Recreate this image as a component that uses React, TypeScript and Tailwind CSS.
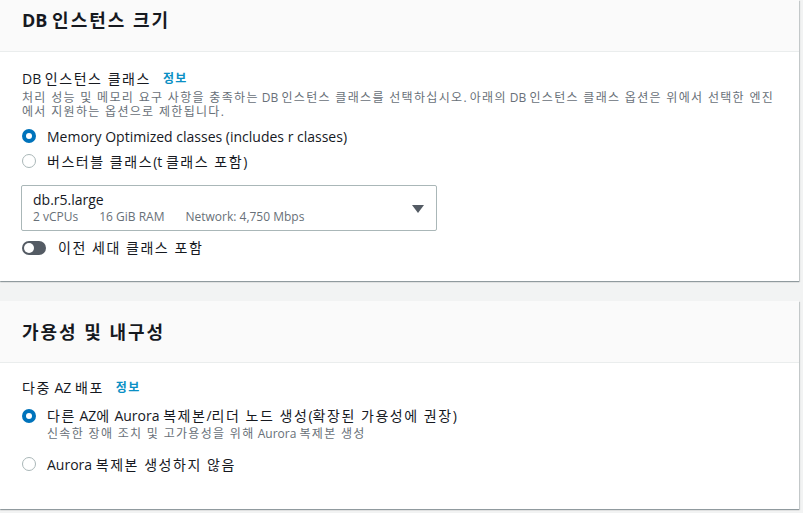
import React from "react";

const font = { fontFamily: '"Open Sans", "Noto Sans CJK KR", "Noto Sans", sans-serif' };

function K({ children }: { children: string }) {
  const parts = children.split(/([\uac00-\ud7a3]+(?:\s+[\uac00-\ud7a3]+)*)/);
  return (
    <span>
      {parts.map((p, i) =>
        /[\uac00-\ud7a3]/.test(p) ? (
          <span key={i} className="tracking-[0.11em]">
            {p}
          </span>
        ) : (
          <React.Fragment key={i}>{p}</React.Fragment>
        )
      )}
    </span>
  );
}

function Radio({ checked }: { checked: boolean }) {
  return checked ? (
    <span className="flex h-[14px] w-[14px] shrink-0 items-center justify-center rounded-full bg-[#0073bb]">
      <span className="h-[6px] w-[6px] rounded-full bg-white" />
    </span>
  ) : (
    <span className="block h-[14px] w-[14px] shrink-0 rounded-full border border-[#aab7b8] bg-white" />
  );
}

function Info() {
  return (
    <span className="ml-[12px] text-[12px] font-bold tracking-[0.11em] text-[#0a8fc4]">정보</span>
  );
}

export default function App() {
  return (
    <div className="min-h-[513px] w-[803px] bg-[#f2f3f3] pr-[4px] text-[#16191f]" style={font}>
      <section className="bg-white shadow-[0_1px_1px_0_rgba(0,28,36,0.3),1px_1px_1px_0_rgba(0,28,36,0.15)]">
        <div className="flex h-[52px] items-start border-b border-[#eaeded] bg-[#fafafa] pl-[22px] pt-[6px]">
          <h2 className="text-[18px] font-bold leading-[28px]">
            <K>DB 인스턴스 크기</K>
          </h2>
        </div>
        <div className="pl-[22px] pr-[10px] pt-[16px] pb-[23px]">
          <div className="flex items-center text-[14px] leading-[22px]">
            <K>DB 인스턴스 클래스</K>
            <Info />
          </div>
          <p className="mt-[1px] whitespace-nowrap text-[12px] leading-[14px] text-[#687078]">
            <K>처리 성능 및 메모리 요구 사항을 충족하는 DB 인스턴스 클래스를 선택하십시오. 아래의 DB 인스턴스 클래스 옵션은 위에서 선택한 엔진</K>
            <br />
            <K>에서 지원하는 옵션으로 제한됩니다.</K>
          </p>
          <div className="mt-[7px] flex flex-col gap-[5px]">
            <label className="flex h-[20px] items-center gap-[11px] text-[14px]">
              <Radio checked />
              <span>Memory Optimized classes (includes r classes)</span>
            </label>
            <label className="flex h-[20px] items-center gap-[11px] text-[14px]">
              <Radio checked={false} />
              <K>버스터블 클래스(t 클래스 포함)</K>
            </label>
          </div>
          <div className="ml-[-1px] mt-[14px] flex h-[46px] w-[416px] items-center justify-between rounded-[2px] border border-[#aab7b8] bg-white pl-[11px] pr-[12px]">
            <div className="flex flex-col">
              <span className="text-[14px] leading-[18px]">db.r5.large</span>
              <span className="flex gap-[21px] text-[12px] leading-[16px] text-[#687078]">
                <span>2 vCPUs</span>
                <span>16 GiB RAM</span>
                <span>Network: 4,750 Mbps</span>
              </span>
            </div>
            <svg width="12" height="8" viewBox="0 0 12 8" className="mt-[2px]">
              <path d="M0 0h12L6 8z" fill="#545b64" />
            </svg>
          </div>
          <div className="mt-[6px] flex items-center gap-[12px] text-[14px]">
            <span className="relative inline-block h-[14px] w-[24px] rounded-full bg-[#545b64]">
              <span className="absolute left-[2px] top-[2px] h-[10px] w-[10px] rounded-full bg-white" />
            </span>
            <K>이전 세대 클래스 포함</K>
          </div>
        </div>
      </section>

      <div className="h-[20px]" />

      <section className="bg-white shadow-[0_1px_1px_0_rgba(0,28,36,0.3),1px_1px_1px_0_rgba(0,28,36,0.15)]">
        <div className="flex h-[62px] items-center border-b border-[#eaeded] bg-[#fafafa] pl-[22px]">
          <h2 className="text-[18px] font-bold leading-[28px]">
            <K>가용성 및 내구성</K>
          </h2>
        </div>
        <div className="pl-[22px] pr-[10px] pt-[14px] pb-[35px]">
          <div className="flex items-center text-[14px] leading-[22px]">
            <K>다중 AZ 배포</K>
            <Info />
          </div>
          <div className="mt-[7px] flex flex-col gap-[12px]">
            <div className="flex items-start gap-[11px] text-[14px]">
              <div className="mt-[3px] flex">
                <Radio checked />
              </div>
              <div className="flex flex-col">
                <span className="leading-[20px]">
                  <K>다른 AZ에 Aurora 복제본/리더 노드 생성(확장된 가용성에 권장)</K>
                </span>
                <span className="text-[12px] leading-[16px] text-[#687078]">
                  <K>신속한 장애 조치 및 고가용성을 위해 Aurora 복제본 생성</K>
                </span>
              </div>
            </div>
            <label className="flex h-[20px] items-center gap-[11px] text-[14px]">
              <Radio checked={false} />
              <K>Aurora 복제본 생성하지 않음</K>
            </label>
          </div>
        </div>
      </section>
    </div>
  );
}
